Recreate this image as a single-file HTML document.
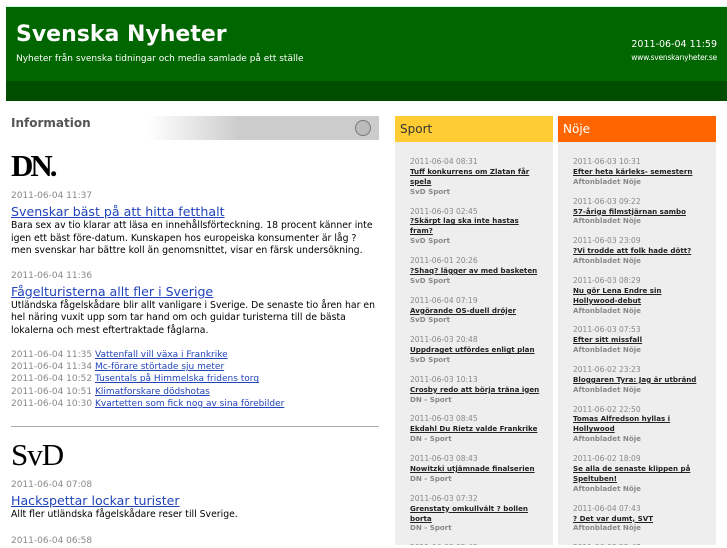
<!DOCTYPE html>
<html><head><meta charset="utf-8"><style>
body{margin:0;background:#fff;font-family:"DejaVu Sans","Liberation Sans",sans-serif;width:727px;height:545px;overflow:hidden;position:relative}
#hd{position:absolute;left:6px;top:6px;width:721px;height:94px;background:#006600;border-top:1px solid #cfd;}
#hd .band{position:absolute;left:0;bottom:0;width:100%;height:20px;background:#004d00}
#hd h1{position:absolute;left:10px;top:15px;margin:0;color:#fff;font-size:22px;font-weight:bold}
#hd .sub{position:absolute;left:10px;top:47px;color:#fff;font-size:9px}
#hd .dt{position:absolute;right:10px;top:32px;color:#fff;font-size:9.5px;text-align:right}
#hd .url{position:absolute;right:10px;top:46px;color:#fff;font-size:7.5px;letter-spacing:-0.2px}
#left{position:absolute;left:11px;top:112px;width:368px;font-size:9.3px;color:#000}
.info{font-size:12px;font-weight:bold;color:#555;position:absolute;top:4px;left:0}
.bar{position:absolute;left:137px;top:4px;width:231px;height:24px;background:linear-gradient(to right,#fff,#ccc 40%,#ccc)}
.bar i{position:absolute;right:8px;top:4px;width:14px;height:14px;border-radius:50%;border:1px solid #777;background:#bbb}
.logo{font-family:"Liberation Serif",serif;font-size:31px;font-weight:bold;letter-spacing:-3px;line-height:30px}
.d{color:#888;font-size:9px}
a{color:#2244bb}
.t{font-size:12.6px;display:block;line-height:17px}
p{margin:0;line-height:12.5px;white-space:nowrap}
.col{position:absolute;top:116px;width:158px;height:429px;background:#eee;overflow:hidden}
.col .h{height:26px;font-size:12px;line-height:26px;padding-left:5px}
.col .it{padding:0 0 0 15px;font-size:7.5px;line-height:9.9px;margin-bottom:9.9px;white-space:nowrap}
.col .it .dd{color:#888}
.col .it a{color:#222;font-weight:bold;text-decoration:underline;font-size:7.1px}
.col .it .s{color:#888;font-weight:bold;font-size:7.1px}
</style></head><body>
<div id="hd"><div class="band"></div><h1>Svenska Nyheter</h1><div class="sub">Nyheter från svenska tidningar och media samlade på ett ställe</div><div class="dt">2011-06-04 11:59</div><div class="url">www.svenskanyheter.se</div></div>
<div id="left">
<div class="info">Information</div><div class="bar"><i></i></div>
<div style="position:absolute;top:39px;left:0;width:368px">
<div class="logo">DN.</div>
<div class="d" style="margin-top:8px;line-height:14px">2011-06-04 11:37</div>
<a class="t" href="#">Svenskar bäst på att hitta fetthalt</a>
<p>Bara sex av tio klarar att läsa en innehållsförteckning. 18 procent känner inte<br>igen ett bäst före-datum. Kunskapen hos europeiska konsumenter är låg ?<br>men svenskar har bättre koll än genomsnittet, visar en färsk undersökning.</p>
<div class="d" style="margin-top:11px;line-height:14px">2011-06-04 11:36</div>
<a class="t" href="#">Fågelturisterna allt fler i Sverige</a>
<p>Utländska fågelskådare blir allt vanligare i Sverige. De senaste tio åren har en<br>hel näring vuxit upp som tar hand om och guidar turisterna till de bästa<br>lokalerna och mest eftertraktade fåglarna.</p>
<div style="margin-top:12px;line-height:12.2px;font-size:9px">
<div><span class="d">2011-06-04 11:35</span> <a href="#">Vattenfall vill växa i Frankrike</a></div>
<div><span class="d">2011-06-04 11:34</span> <a href="#">Mc-förare störtade sju meter</a></div>
<div><span class="d">2011-06-04 10:52</span> <a href="#">Tusentals på Himmelska fridens torg</a></div>
<div><span class="d">2011-06-04 10:51</span> <a href="#">Klimatforskare dödshotas</a></div>
<div><span class="d">2011-06-04 10:30</span> <a href="#">Kvartetten som fick nog av sina förebilder</a></div>
</div>
<div style="border-top:1px solid #aaa;margin-top:16px"></div>
<div class="logo" style="font-weight:normal;letter-spacing:-1px;margin-top:13px">SvD</div>
<div class="d" style="margin-top:8px;line-height:14px">2011-06-04 07:08</div>
<a class="t" href="#">Hackspettar lockar turister</a>
<p>Allt fler utländska fågelskådare reser till Sverige.</p>
<div class="d" style="margin-top:12px;line-height:14px">2011-06-04 06:58</div>
</div></div>
<div class="col" style="left:395px"><div class="h" style="background:#ffcc33;color:#333">Sport</div><div style="padding-top:15px">
<div class="it"><div class="dd">2011-06-04 08:31</div><a href="#">Tuff konkurrens om Zlatan får<br>spela</a><div class="s">SvD Sport</div></div>
<div class="it"><div class="dd">2011-06-03 02:45</div><a href="#">?Skärpt lag ska inte hastas<br>fram?</a><div class="s">SvD Sport</div></div>
<div class="it"><div class="dd">2011-06-01 20:26</div><a href="#">?Shaq? lägger av med basketen</a><div class="s">SvD Sport</div></div>
<div class="it"><div class="dd">2011-06-04 07:19</div><a href="#">Avgörande OS-duell dröjer</a><div class="s">SvD Sport</div></div>
<div class="it"><div class="dd">2011-06-03 20:48</div><a href="#">Uppdraget utfördes enligt plan</a><div class="s">SvD Sport</div></div>
<div class="it"><div class="dd">2011-06-03 10:13</div><a href="#">Crosby redo att börja träna igen</a><div class="s">DN - Sport</div></div>
<div class="it"><div class="dd">2011-06-03 08:45</div><a href="#">Ekdahl Du Rietz valde Frankrike</a><div class="s">DN - Sport</div></div>
<div class="it"><div class="dd">2011-06-03 08:43</div><a href="#">Nowitzki utjämnade finalserien</a><div class="s">DN - Sport</div></div>
<div class="it"><div class="dd">2011-06-03 07:32</div><a href="#">Grenstaty omkullvält ? bollen<br>borta</a><div class="s">DN - Sport</div></div>
<div class="it"><div class="dd">2011-06-03 05:42</div></div>
</div></div>
<div class="col" style="left:558px"><div class="h" style="background:#ff6600;color:#fff">Nöje</div><div style="padding-top:15px">
<div class="it"><div class="dd">2011-06-03 10:31</div><a href="#">Efter heta kärleks- semestern</a><div class="s">Aftonbladet Nöje</div></div>
<div class="it"><div class="dd">2011-06-03 09:22</div><a href="#">57-åriga filmstjärnan sambo</a><div class="s">Aftonbladet Nöje</div></div>
<div class="it"><div class="dd">2011-06-03 23:09</div><a href="#">?Vi trodde att folk hade dött?</a><div class="s">Aftonbladet Nöje</div></div>
<div class="it"><div class="dd">2011-06-03 08:29</div><a href="#">Nu gör Lena Endre sin<br>Hollywood-debut</a><div class="s">Aftonbladet Nöje</div></div>
<div class="it"><div class="dd">2011-06-03 07:53</div><a href="#">Efter sitt missfall</a><div class="s">Aftonbladet Nöje</div></div>
<div class="it"><div class="dd">2011-06-02 23:23</div><a href="#">Bloggaren Tyra: Jag är utbränd</a><div class="s">Aftonbladet Nöje</div></div>
<div class="it"><div class="dd">2011-06-02 22:50</div><a href="#">Tomas Alfredson hyllas i<br>Hollywood</a><div class="s">Aftonbladet Nöje</div></div>
<div class="it"><div class="dd">2011-06-02 18:09</div><a href="#">Se alla de senaste klippen på<br>Speltuben!</a><div class="s">Aftonbladet Nöje</div></div>
<div class="it"><div class="dd">2011-06-04 07:43</div><a href="#">? Det var dumt, SVT</a><div class="s">Aftonbladet Nöje</div></div>
<div class="it"><div class="dd">2011-06-03 22:47</div></div>
</div></div>
</body></html>
